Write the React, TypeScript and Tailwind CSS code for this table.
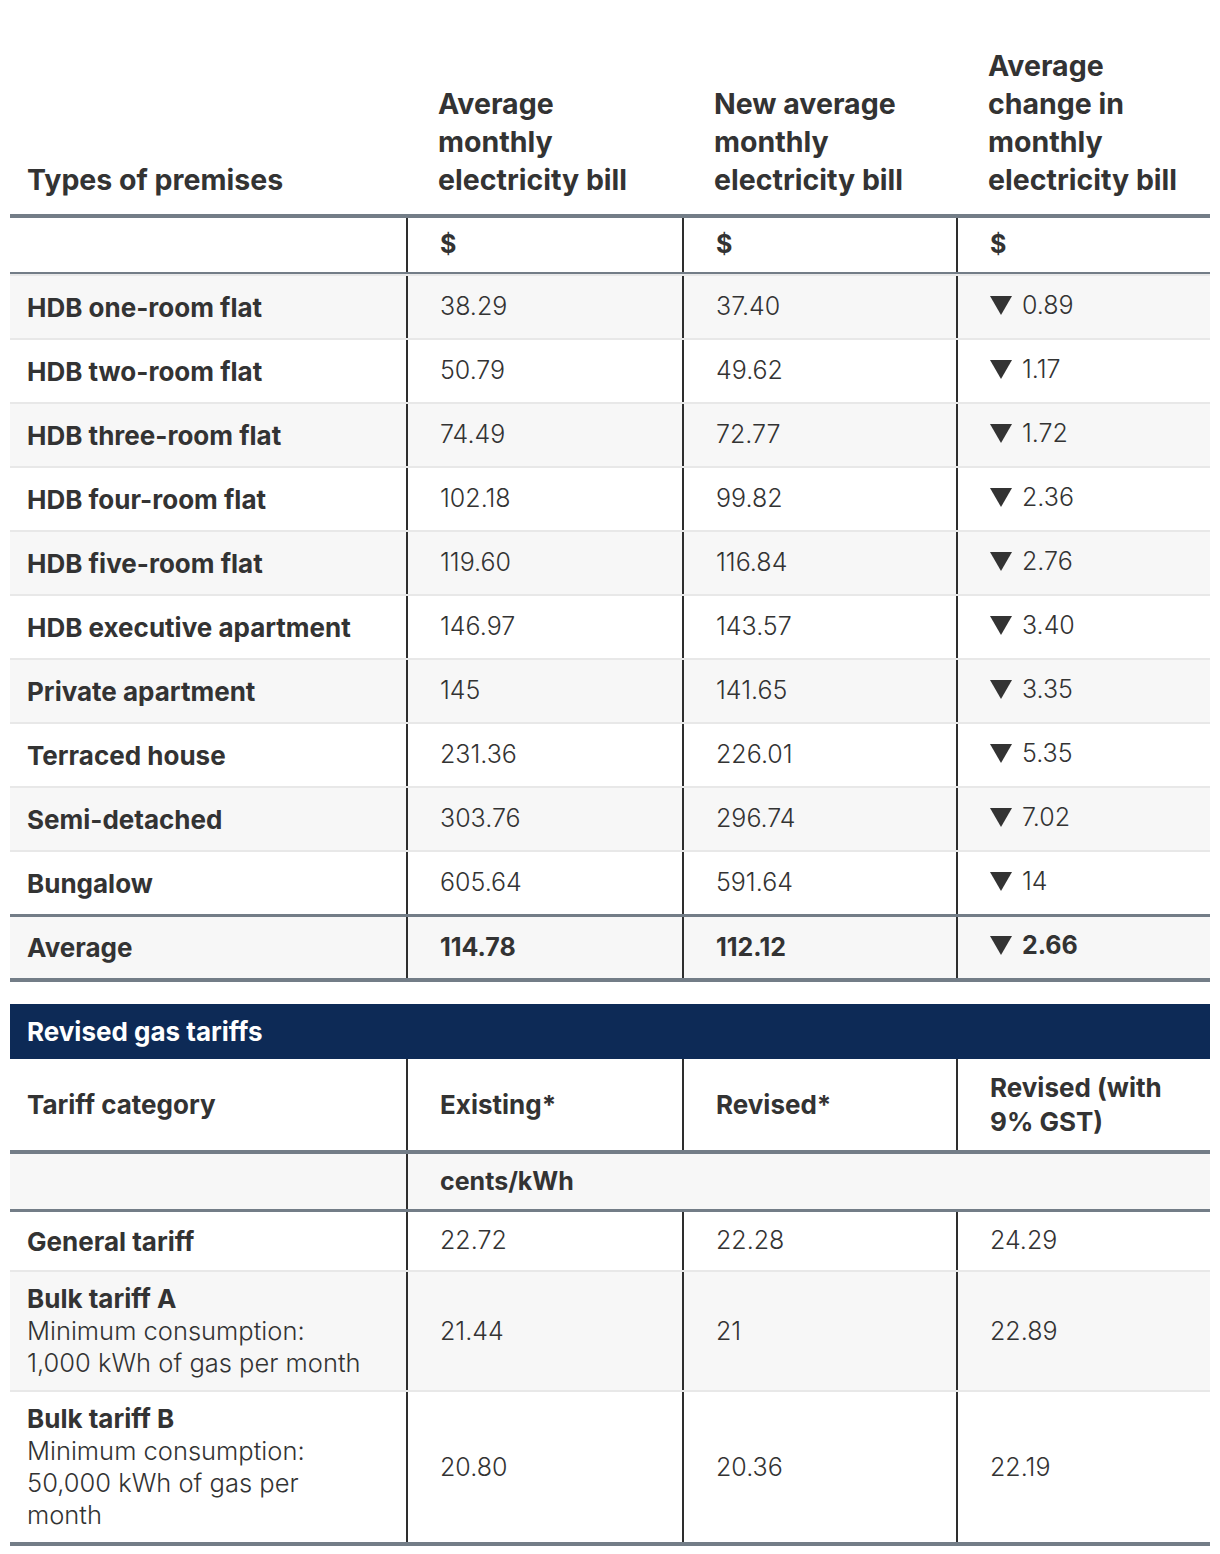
import React from "react";

const elecRows: [string, string, string, string][] = [
  ["HDB one-room flat", "38.29", "37.40", "0.89"],
  ["HDB two-room flat", "50.79", "49.62", "1.17"],
  ["HDB three-room flat", "74.49", "72.77", "1.72"],
  ["HDB four-room flat", "102.18", "99.82", "2.36"],
  ["HDB five-room flat", "119.60", "116.84", "2.76"],
  ["HDB executive apartment", "146.97", "143.57", "3.40"],
  ["Private apartment", "145", "141.65", "3.35"],
  ["Terraced house", "231.36", "226.01", "5.35"],
  ["Semi-detached", "303.76", "296.74", "7.02"],
  ["Bungalow", "605.64", "591.64", "14"],
];

const grid = "grid grid-cols-[396px_276px_274px_254px]";
const c1 = "pl-[17px] pr-4 flex items-center";
const cN = "pl-[32px] pr-4 flex items-center border-l-2 border-[#2e2e2e]";

function Down({ v, bold }: { v: string; bold?: boolean }) {
  return (
    <span className={`flex items-center -mt-[3px] ${bold ? "font-bold" : "font-light"}`}>
      <svg width="22" height="20" viewBox="0 0 22 20" className="mr-[10px] -mt-[2px]">
        <polygon points="0,1 22,1 11,20" fill="#333333" />
      </svg>
      <span>{v}</span>
    </span>
  );
}

export default function App() {
  return (
    <div
      className="w-[1220px] bg-white text-[#333333] pb-[10px]"
      style={{ fontFamily: 'Inter, Roboto, "Liberation Sans", sans-serif' }}
    >
      <div className="ml-[10px] w-[1200px]">
        {/* Electricity header */}
        <div className={`${grid} h-[214px] pt-[47px] pb-[15px] text-[28.5px] leading-[38px] font-bold`}>
          <div className="pl-[17px] flex items-end">Types of premises</div>
          <div className="pl-[32px] flex items-end">
            <span>
              Average
              <br />
              monthly
              <br />
              electricity bill
            </span>
          </div>
          <div className="pl-[32px] flex items-end">
            <span>
              New average
              <br />
              monthly
              <br />
              electricity bill
            </span>
          </div>
          <div className="pl-[32px] flex items-end">
            <span>
              Average
              <br />
              change in
              <br />
              monthly
              <br />
              electricity bill
            </span>
          </div>
        </div>
        <div className="h-[4px] bg-[#737d87]" />
        <div className={`${grid} h-[54px] text-[25px] font-bold`}>
          <div className={c1}></div>
          <div className={cN}>$</div>
          <div className={cN}>$</div>
          <div className={cN}>$</div>
        </div>
        <div className="h-[2px] bg-[#737d87]" />
        {elecRows.map((r, i) => (
          <div
            key={r[0]}
            className={`${grid} h-[64px] border-t-2 border-[#e8e8e8] text-[25px] font-light ${i % 2 === 0 ? "bg-[#f7f7f7]" : "bg-white"}`}
          >
            <div className={`${c1} font-bold text-[26px]`}>{r[0]}</div>
            <div className={cN}>{r[1]}</div>
            <div className={cN}>{r[2]}</div>
            <div className={cN}>
              <Down v={r[3]} />
            </div>
          </div>
        ))}
        <div className="h-[3px] bg-[#737d87]" />
        <div className={`${grid} h-[61px] text-[25px] font-bold bg-[#f7f7f7]`}>
          <div className={`${c1} text-[26px]`}>Average</div>
          <div className={cN}>114.78</div>
          <div className={cN}>112.12</div>
          <div className={cN}>
            <Down v="2.66" bold />
          </div>
        </div>
        <div className="h-[4px] bg-[#737d87]" />

        {/* Gas */}
        <div className="mt-[22px] h-[55px] bg-[#0d2a56] text-white font-bold text-[26px] flex items-center pl-[17px]">
          Revised gas tariffs
        </div>
        <div className={`${grid} h-[91px] text-[26px] leading-[34px] font-bold`}>
          <div className={c1}>Tariff category</div>
          <div className={cN}>Existing*</div>
          <div className={cN}>Revised*</div>
          <div className={cN}>
            <span>
              Revised (with
              <br />
              9% GST)
            </span>
          </div>
        </div>
        <div className="h-[4px] bg-[#737d87]" />
        <div className="grid grid-cols-[396px_804px] h-[55px] bg-[#f7f7f7] text-[25px] font-bold">
          <div className={c1}></div>
          <div className={cN}>cents/kWh</div>
        </div>
        <div className="h-[3px] bg-[#737d87]" />
        <div className={`${grid} h-[58px] text-[25px] font-light`}>
          <div className={`${c1} font-bold text-[26px]`}>General tariff</div>
          <div className={cN}>22.72</div>
          <div className={cN}>22.28</div>
          <div className={cN}>24.29</div>
        </div>
        <div className={`${grid} h-[120px] border-t-2 border-[#e8e8e8] bg-[#f7f7f7] text-[25px] leading-[32px] font-light`}>
          <div className={c1}>
            <div>
              <div className="font-bold text-[26px]">Bulk tariff A</div>
              <div className="text-[25.5px]">
                Minimum consumption:
                <br />
                1,000 kWh of gas per month
              </div>
            </div>
          </div>
          <div className={cN}>21.44</div>
          <div className={cN}>21</div>
          <div className={cN}>22.89</div>
        </div>
        <div className={`${grid} h-[152px] border-t-2 border-[#e8e8e8] text-[25px] leading-[32px] font-light`}>
          <div className={c1}>
            <div>
              <div className="font-bold text-[26px]">Bulk tariff B</div>
              <div className="text-[25.5px]">
                Minimum consumption:
                <br />
                50,000 kWh of gas per
                <br />
                month
              </div>
            </div>
          </div>
          <div className={cN}>20.80</div>
          <div className={cN}>20.36</div>
          <div className={cN}>22.19</div>
        </div>
        <div className="h-[4px] bg-[#737d87]" />
      </div>
    </div>
  );
}
